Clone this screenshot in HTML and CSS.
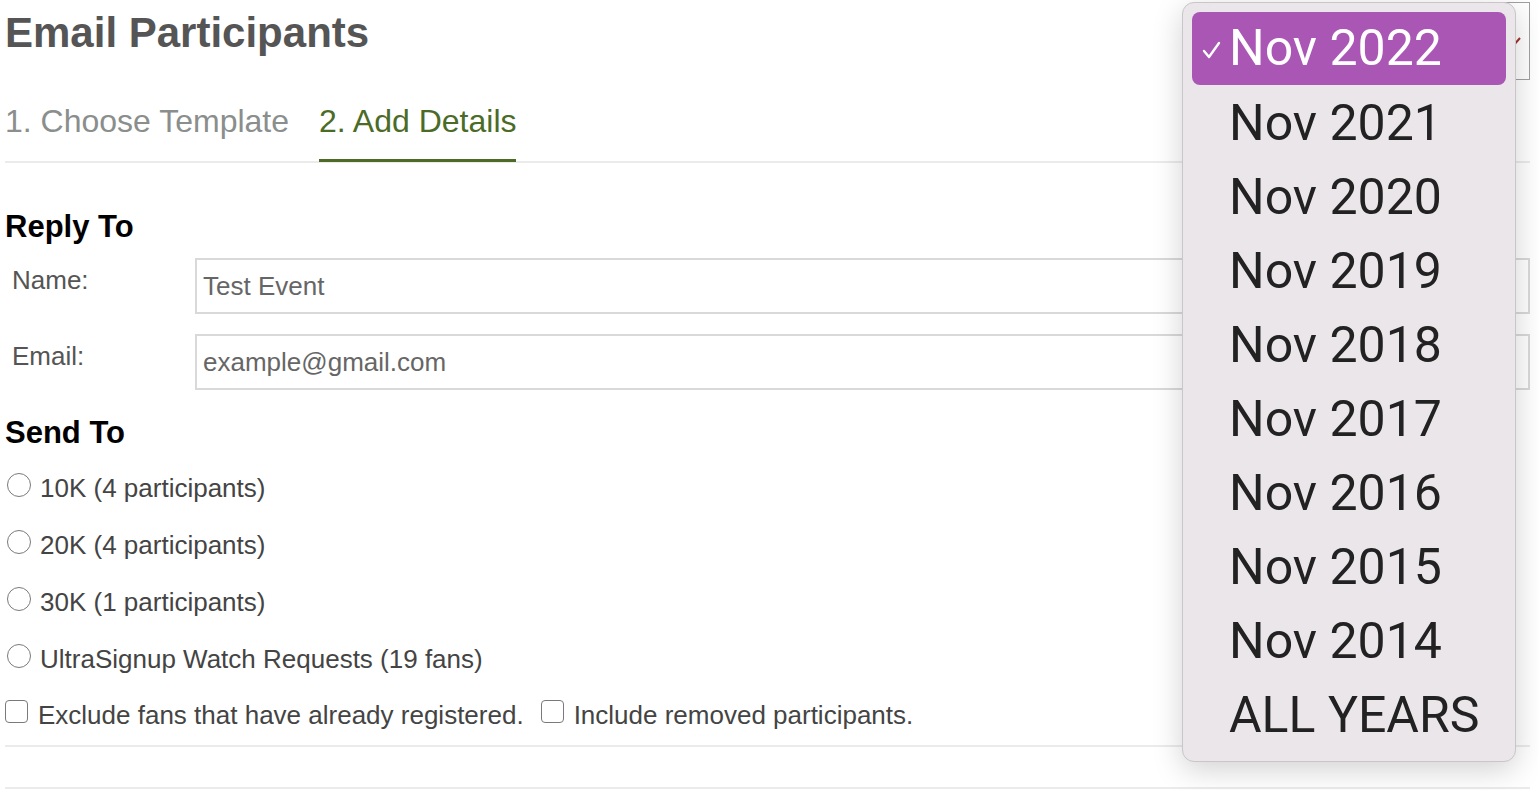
FILE: index.html
```html
<!DOCTYPE html>
<html lang="en">
<head>
    <meta charset="UTF-8">
    <title>Email Participants</title>
    <link rel="stylesheet" href="styles.css">
</head>
<body>

    <div class="page">
        <div class="page-head">
            <h1>Email Participants</h1>
            <div class="year-select">
                <svg class="year-arrow" width="16" height="10" viewBox="0 0 16 10">
                    <path d="M1 1 L8 9 L15 1" fill="none" stroke="#a3322c" stroke-width="2"/>
                </svg>
            </div>
        </div>

        <!-- Steps -->
        <div class="steps">
            <a class="step">1. Choose Template</a>
            <a class="step active">2. Add Details</a>
        </div>

        <div class="details">
            <h3>Reply To</h3>
            <div class="field-row">
                <label>Name:</label>
                <input type="text" value="Test Event">
            </div>
            <div class="field-row">
                <label>Email:</label>
                <input type="text" value="example@gmail.com">
            </div>

            <h3 class="send-to">Send To</h3>
            <label class="radio-row"><input type="radio" name="sendTo"> 10K (4 participants)</label>
            <label class="radio-row"><input type="radio" name="sendTo"> 20K (4 participants)</label>
            <label class="radio-row"><input type="radio" name="sendTo"> 30K (1 participants)</label>
            <label class="radio-row"><input type="radio" name="sendTo"> UltraSignup Watch Requests (19 fans)</label>

            <div class="check-row">
                <label><input type="checkbox"> Exclude fans that have already registered.</label>
                <label><input type="checkbox"> Include removed participants.</label>
            </div>
        </div>

        <div class="rule"></div>
        <div class="rule"></div>
    </div>

    <!-- Open year dropdown -->
    <ul class="year-menu">
        <li class="selected">
            <svg class="tick" width="19" height="18" viewBox="0 0 19 18">
                <path d="M2 10 L7 16 L17 2" fill="none" stroke="#fff" stroke-width="2.4" stroke-linecap="round" stroke-linejoin="round"/>
            </svg>Nov 2022
        </li>
        <li>Nov 2021</li>
        <li>Nov 2020</li>
        <li>Nov 2019</li>
        <li>Nov 2018</li>
        <li>Nov 2017</li>
        <li>Nov 2016</li>
        <li>Nov 2015</li>
        <li>Nov 2014</li>
        <li>ALL YEARS</li>
    </ul>

</body>
</html>
```

FILE: styles.css
```css
body {
    font-family: "Liberation Sans", Arial, Helvetica, sans-serif;
    margin: 0;
    padding: 0;
    background-color: #fff;
    color: #555;
}
.page {
    padding: 0 8px 0 5px;
}
.page-head {
    display: flex;
    justify-content: space-between;
    align-items: flex-start;
}
.page-head h1 {
    margin: 8px 0 0 0;
    font-size: 42px;
    line-height: 50px;
    font-weight: bold;
    color: #555;
}
.year-select {
    position: relative;
    margin-top: 2px;
    width: 330px;
    height: 76px;
    border: 1px solid #a0a0a0;
    background-color: #fff;
}
.year-arrow {
    position: absolute;
    right: 8px;
    top: 34px;
}
.steps {
    display: flex;
    gap: 30px;
    margin-top: 21px;
    border-bottom: 2px solid #ebebeb;
}
.step {
    font-size: 32px;
    line-height: 40px;
    padding-bottom: 18px;
    color: #8a8e8c;
    border-bottom: 3px solid transparent;
    margin-bottom: -1px;
}
.step.active {
    color: #4b6b27;
    border-bottom-color: #4b6b27;
}
.details h3 {
    margin: 46px 0 0 0;
    font-size: 31px;
    line-height: 36px;
    color: #000;
}
.details h3.send-to {
    margin-top: 25px;
}
.field-row {
    display: flex;
    align-items: flex-start;
    margin-top: 13px;
}
.field-row + .field-row {
    margin-top: 20px;
}
.field-row label {
    width: 183px;
    padding: 7px 0 0 7px;
    font-size: 26px;
    line-height: 30px;
    color: #555;
}
.field-row input {
    flex: 1;
    height: 56px;
    box-sizing: border-box;
    border: 2px solid #d9d9d9;
    padding: 0 6px;
    font-family: inherit;
    font-size: 26px;
    color: #666;
    outline: none;
}
.radio-row {
    display: flex;
    align-items: flex-start;
    gap: 9px;
    margin-top: 27px;
    font-size: 26px;
    line-height: 30px;
    color: #444;
}
.send-to + .radio-row {
    margin-top: 22px;
}
.radio-row input {
    appearance: none;
    width: 24px;
    height: 24px;
    margin: 0 0 0 2px;
    border: 1.5px solid #7a7a7a;
    border-radius: 50%;
    background-color: #fff;
}
.check-row {
    display: flex;
    gap: 17px;
    margin-top: 26px;
    font-size: 26px;
    line-height: 30px;
    color: #444;
}
.check-row label {
    display: flex;
    align-items: flex-start;
    gap: 10px;
}
.check-row input {
    appearance: none;
    width: 23px;
    height: 23px;
    margin: 0;
    border: 1.5px solid #7a7a7a;
    border-radius: 4px;
    background-color: #fff;
}
.rule {
    height: 2px;
    background-color: #ebebeb;
    margin-top: 15px;
}
.rule + .rule {
    margin-top: 40px;
}
.year-menu {
    position: absolute;
    top: 2px;
    left: 1182px;
    width: 334px;
    height: 760px;
    box-sizing: border-box;
    margin: 0;
    padding: 9px;
    list-style: none;
    background-color: #ebe6ea;
    border: 1px solid #c9c5c9;
    border-radius: 12px;
    box-shadow: 0 8px 30px rgba(0, 0, 0, 0.18);
    font-family: Roboto, "Liberation Sans", sans-serif;
}
.year-menu li {
    position: relative;
    height: 74px;
    line-height: 74px;
    padding-left: 37px;
    font-size: 50px;
    color: #222;
    border-radius: 8px;
}
.year-menu li.selected {
    height: 73px;
    margin-bottom: 1px;
    line-height: 72px;
    background-color: #a956b4;
    color: #fff;
}
.tick {
    position: absolute;
    left: 10px;
    top: 29px;
}
```
